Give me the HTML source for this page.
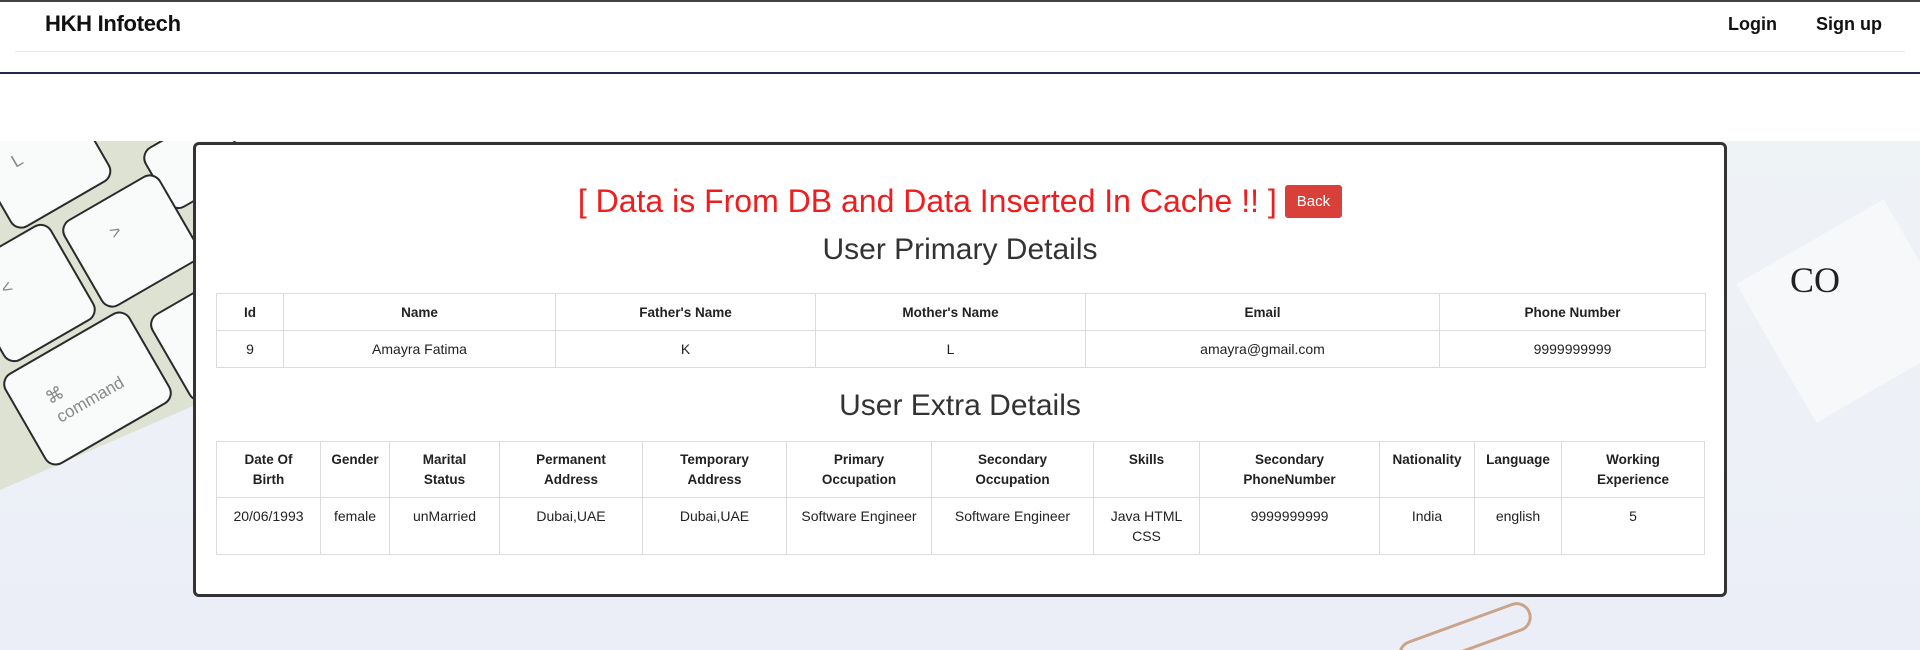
<!DOCTYPE html>
<html><head><meta charset="utf-8"><style>
*{margin:0;padding:0;box-sizing:border-box}
body{width:1920px;height:650px;overflow:hidden;background:#fff;font-family:"Liberation Sans",sans-serif;position:relative;color:#222}
.top{position:absolute;left:0;top:0;width:1920px;height:2px;background:#444}
.brand{position:absolute;left:45px;top:11px;font-size:22px;font-weight:bold;color:#111;letter-spacing:-0.3px}
.nav{position:absolute;top:14px;font-size:18px;font-weight:bold;color:#111}
.l1{position:absolute;left:15px;top:51px;width:1890px;height:1px;background:#e6eaee}
.l2{position:absolute;left:0;top:72px;width:1920px;height:2px;background:#1c2a4e}
.bg{position:absolute;left:0;top:141px;width:1920px;height:509px;background:linear-gradient(180deg,#eef3f6,#eceef7);overflow:hidden}
.card{position:absolute;left:193px;top:142px;width:1534px;height:455px;background:#fff;border:3px solid #333;border-radius:6px}
.title{position:absolute;left:0;top:38px;width:1528px;text-align:center;font-size:32px;color:#ef1d1d}
.back{display:inline-block;vertical-align:middle;margin-left:8px;background:#d9403a;color:#fff;font-size:15px;padding:8px 12px;border-radius:3px;position:relative;top:-2px}
h2{position:absolute;left:0;width:1528px;text-align:center;font-size:30px;font-weight:normal;color:#333}
table{position:absolute;left:20px;border-collapse:collapse;font-size:14px;color:#222}
td,th{border:1px solid #dcdcdc;text-align:center;vertical-align:top}
th{font-weight:bold;font-size:13.5px}
#t1{top:148px;width:1490px}
#t1 th,#t1 td{height:37px;vertical-align:middle}
#t2{top:296px;width:1489px}
#t2 th{height:56px;padding-top:8px;line-height:20px}
#t2 td{height:57px;padding-top:8px;line-height:20px}
.kb{position:absolute;left:0;top:0;width:200px;height:360px;background:#dde2d2;clip-path:polygon(0 0,200px 0,200px 262px,0 349px)}
.key{position:absolute;background:#f8fbfa;border:2px solid #2a2a2a;border-radius:13px;transform:rotate(-30deg);color:#888;font-size:18px}
</style></head><body>
<div class="top"></div>
<div class="brand">HKH Infotech</div>
<div class="nav" style="left:1728px">Login</div>
<div class="nav" style="left:1816px">Sign up</div>
<div class="l1"></div><div class="l2"></div>
<div class="bg">
 <div class="kb"></div>
 <div class="key" style="left:-15px;top:-25px;width:115px;height:95px;padding:20px 30px">L</div>
 <div class="key" style="left:150px;top:-15px;width:90px;height:70px"></div>
 <div class="key" style="left:75px;top:50px;width:112px;height:100px;padding:22px 40px">&gt;</div>
 <div class="key" style="left:-25px;top:97px;width:105px;height:110px;padding:28px 30px">&lt;</div>
 <div class="key" style="left:165px;top:152px;width:80px;height:100px"></div>
 <div class="key" style="left:15px;top:195px;width:145px;height:105px;padding:30px 20px 0 30px">⌘<br><span style="font-size:17px">command</span></div>
 <div style="position:absolute;left:1765px;top:90px;width:170px;height:160px;background:#f7f8fa;transform:rotate(-30deg)"></div>
 <div style="position:absolute;left:1790px;top:118px;font-family:'Liberation Serif',serif;font-size:36px;color:#222">CO</div>
 <div style="position:absolute;left:1395px;top:480px;width:140px;height:30px;border:3px solid #c9a48a;border-radius:15px;transform:rotate(-20deg)"></div>
</div>
<div class="card">
 <div class="title">[ Data is From DB and Data Inserted In Cache !! ]<span class="back">Back</span></div>
 <h2 style="top:88px">User Primary Details</h2>
 <table id="t1">
  <tr><th style="width:67px">Id</th><th style="width:272px">Name</th><th style="width:260px">Father's Name</th><th style="width:270px">Mother's Name</th><th style="width:354px">Email</th><th>Phone Number</th></tr>
  <tr><td>9</td><td>Amayra Fatima</td><td>K</td><td>L</td><td>amayra@gmail.com</td><td>9999999999</td></tr>
 </table>
 <h2 style="top:244px">User Extra Details</h2>
 <table id="t2">
  <tr><th style="width:104px">Date Of<br>Birth</th><th style="width:69px">Gender</th><th style="width:110px">Marital<br>Status</th><th style="width:143px">Permanent<br>Address</th><th style="width:144px">Temporary<br>Address</th><th style="width:145px">Primary<br>Occupation</th><th style="width:162px">Secondary<br>Occupation</th><th style="width:106px">Skills</th><th style="width:180px">Secondary<br>PhoneNumber</th><th style="width:95px">Nationality</th><th style="width:87px">Language</th><th>Working<br>Experience</th></tr>
  <tr><td>20/06/1993</td><td>female</td><td>unMarried</td><td>Dubai,UAE</td><td>Dubai,UAE</td><td>Software Engineer</td><td>Software Engineer</td><td>Java HTML<br>CSS</td><td>9999999999</td><td>India</td><td>english</td><td>5</td></tr>
 </table>
</div>
</body></html>
